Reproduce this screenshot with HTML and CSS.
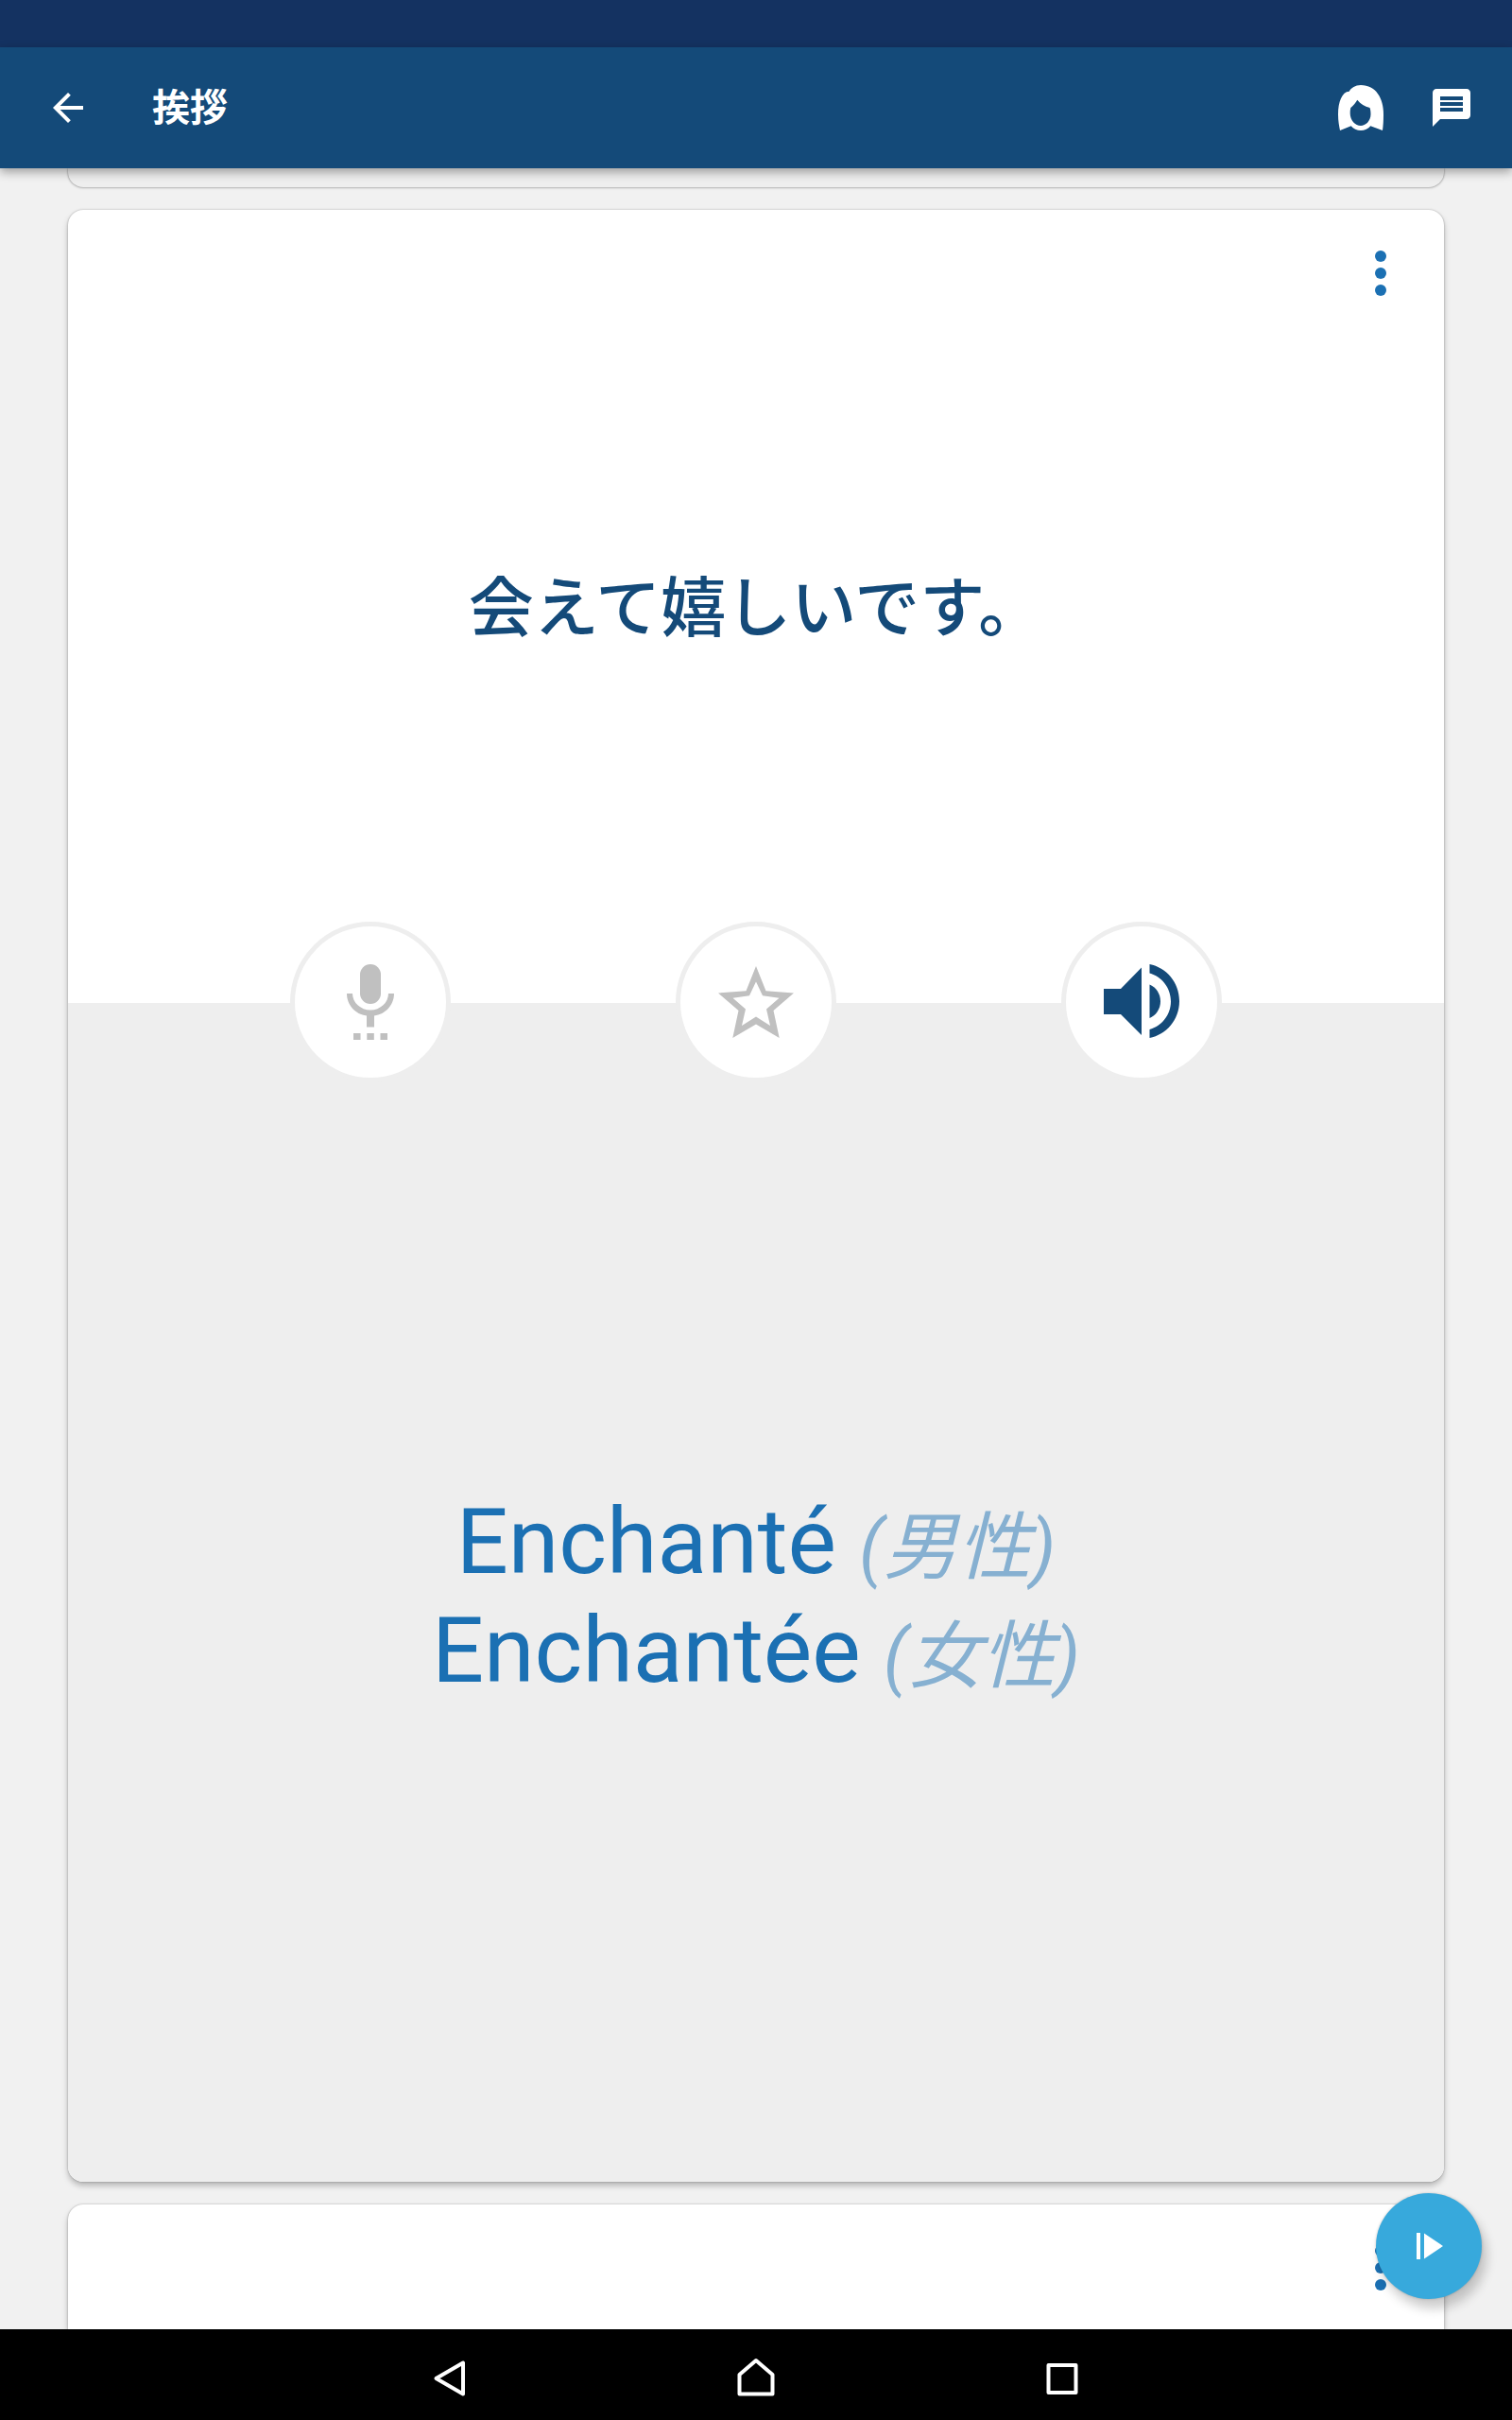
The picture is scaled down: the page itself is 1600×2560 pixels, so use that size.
FILE: index.html
```html
<!DOCTYPE html>
<html lang="ja">
  <head>
    <meta charset="UTF-8" />
    <meta name="viewport" content="width=device-width, initial-scale=1.0" />
    <title>挨拶</title>
    <link rel="stylesheet" href="styles.css">
  </head>
  <body>
    <div class="statusbar"></div>
    <header class="appbar">
      <a class="icon-btn" href="#" aria-label="戻る">
        <svg viewBox="0 0 24 24"><path d="M20 11H7.830l5.590-5.590L12 4l-8 8 8 8 1.410-1.410L7.830 13H20v-2z" /></svg>
      </a>
      <h1>挨拶</h1>
      <button class="icon-btn" aria-label="女性">
        <svg viewBox="0 0 48 48"><path fill-rule="evenodd" d="M24 0C18 0 14 3 11.700 6.700C4 7 0 18 0 31C0 38 1 43 2 48L13.700 43.300C16 46.500 20 48 24 48C28 48 32 46.500 34.300 43.300L47 48C47.700 43 48 38 48 31C48 14 40 0 24 0ZM20.300 15.700C24 20 28 22.500 33.500 24C34.300 26 34.500 28 34.500 31C34.500 38 29 43 24 43C18 43 12.700 37 12.700 30C12.700 28 12.700 26 13.300 24C16 21.500 18.500 19 20.300 15.700Z" /></svg>
      </button>
      <button class="icon-btn" aria-label="メッセージ">
        <svg viewBox="0 0 24 24"><path d="M20 2H4c-1.100 0-1.990.9-1.990 2L2 22l4-4h14c1.100 0 2-.9 2-2V4c0-1.100-.9-2-2-2zm-2 12H6v-2h12v2zm0-3H6V9h12v2zm0-3H6V6h12v2z" /></svg>
      </button>
    </header>

    <main class="cards">
      <article class="card card-prev"></article>

      <article class="card card-current">
        <section class="phrase">
          <button class="menu" aria-label="メニュー">
            <svg viewBox="0 0 96 96"><circle cx="48" cy="30" r="6" /><circle cx="48" cy="48" r="6" /><circle cx="48" cy="66" r="6" /></svg>
          </button>
          <p>会えて嬉しいです。</p>
        </section>
        <section class="translation">
          <div class="actions">
            <button class="round" aria-label="録音">
              <svg viewBox="0 0 80 80">
                <rect x="29" y="0" width="22" height="42" rx="11" />
                <path d="M15 31h6a19 17.500 0 0 0 38 0h6c0 12-9 22-21 23.500V66.500h-8V54.500C24 53 15 43 15 31z" />
                <path d="M22 73h7.500v7H22zM36.300 73h7.500v7h-7.500zM50.500 73H58v7h-7.500z" />
              </svg>
            </button>
            <button class="round" aria-label="お気に入り">
              <svg viewBox="0 0 80 80"><path fill-rule="evenodd" d="M40 2L50.500 28.300L80 30.500L58.500 49L64.700 78L40 63.500L15.300 78L21.500 49L0 30.500L29.500 28.300ZM40 18.500L33 33.300L15.500 35.700L29 47.500L25 65L40 55.500L55 65L51 47.500L64.500 35.700L47 33.300Z" /></svg>
            </button>
            <button class="round sound" aria-label="再生">
              <svg viewBox="0 0 80 80">
                <path d="M0 26h18L40 3.500V75L18 53H0z" />
                <path d="M48.500 21.500C55 24 60 31 60 39.300S55 54.500 48.500 57z" />
                <path d="M48.500 0C66 3.500 80 19 80 39S66 74.500 48.500 78V69C61 65.500 71 54 71 39.300S61 13 48.500 9.500z" />
              </svg>
            </button>
          </div>
          <p>Enchanté <i>(男性)</i><br />Enchantée <i>(女性)</i></p>
        </section>
      </article>

      <article class="card card-next">
        <button class="menu" aria-label="メニュー">
          <svg viewBox="0 0 96 96"><circle cx="48" cy="30" r="6" /><circle cx="48" cy="48" r="6" /><circle cx="48" cy="66" r="6" /></svg>
        </button>
      </article>

      <button class="fab" aria-label="スライド再生">
        <svg viewBox="0 0 48 48"><path d="M11 10h4v28h-4zM19 10.500L39 24L19 37.500z" /></svg>
      </button>
    </main>

    <nav class="navbar">
      <button aria-label="戻る">
        <svg viewBox="0 0 48 48"><path d="M38 11.500v33L9.500 28z" /></svg>
      </button>
      <button aria-label="ホーム">
        <svg viewBox="0 0 48 48"><path d="M24 9L41.500 24V44.500H6.500V24z" /></svg>
      </button>
      <button aria-label="アプリ履歴">
        <svg viewBox="0 0 48 48"><path d="M9.500 14h29v29h-29z" /></svg>
      </button>
    </nav>
  </body>
</html>
```

FILE: styles.css
```css
* {
  box-sizing: border-box;
}
body {
  margin: 0;
  height: 100vh;
  display: flex;
  flex-direction: column;
  overflow: hidden;
  background-color: #f1f1f1;
  font-family: Roboto, "Noto Sans CJK JP", sans-serif;
}
button {
  border: 0;
  padding: 0;
  background: none;
  cursor: pointer;
}
svg {
  display: block;
  fill: currentColor;
}
h1,
p {
  margin: 0;
}

.statusbar {
  flex: none;
  height: 50px;
  background-color: #143261;
}
.appbar {
  flex: none;
  display: flex;
  align-items: center;
  height: 128px;
  padding: 0 40px 0 48px;
  color: #fff;
  background-color: #144a79;
  box-shadow: 0 4px 10px rgba(0, 0, 0, 0.35);
  z-index: 1;
}
.appbar h1 {
  flex: 1;
  margin-left: 65px;
  padding-top: 2px;
  font-size: 40px;
  line-height: 48px;
  font-weight: bold;
}
.icon-btn {
  color: #fff;
}
.icon-btn + .icon-btn {
  margin-left: 48px;
}
.icon-btn svg {
  width: 48px;
  height: 48px;
}

.cards {
  flex: 1;
  min-height: 0;
  position: relative;
  display: flex;
  flex-direction: column;
  gap: 24px;
  padding: 0 72px;
  overflow: hidden;
}
.card {
  position: relative;
  border-radius: 16px;
  background-color: #fff;
  box-shadow: 0 0 2px rgba(0, 0, 0, 0.3), 0 4px 6px rgba(0, 0, 0, 0.25);
}
.card-prev {
  height: 20px;
  border-radius: 0 0 16px 16px;
  background-color: #eee;
  box-shadow: 0 0 2px rgba(0, 0, 0, 0.4), 0 1px 3px rgba(0, 0, 0, 0.15);
}
.card-current {
  flex: 1;
  display: flex;
  flex-direction: column;
}
.card-next {
  height: 132px;
  border-radius: 16px 16px 0 0;
}
.phrase,
.translation {
  display: flex;
  align-items: center;
  justify-content: center;
  text-align: center;
}
.phrase {
  flex: 37;
  color: #144a79;
  font-size: 69px;
  font-weight: 500;
}
.phrase p {
  padding-bottom: 6px;
}
.translation {
  flex: 55;
  position: relative;
  border-radius: 0 0 16px 16px;
  background-color: #eee;
  color: #1b70b3;
  font-size: 97px;
  line-height: 115px;
}
.translation p {
  padding-top: 10px;
}
.translation i {
  font-size: 78px;
  line-height: 1;
  color: #86b0d1;
}
.menu {
  position: absolute;
  top: 19px;
  right: 19px;
  color: #1b70b3;
}
.menu svg {
  width: 96px;
  height: 96px;
}

/* buttons sitting on the line between both halves */
.actions {
  position: absolute;
  top: -86px;
  left: 0;
  right: 0;
  display: flex;
  justify-content: center;
  gap: 238px;
}
.round {
  display: flex;
  align-items: center;
  justify-content: center;
  width: 170px;
  height: 170px;
  border: 5px solid #eee;
  border-radius: 50%;
  background-color: #fff;
  color: #c0c0c0;
}
.round svg {
  width: 80px;
  height: 80px;
}
.sound {
  color: #144a79;
}

.fab {
  position: absolute;
  right: 32px;
  bottom: 32px;
  display: flex;
  align-items: center;
  justify-content: center;
  width: 112px;
  height: 112px;
  border-radius: 50%;
  color: #fff;
  background-color: #37a9dc;
  box-shadow: 0 0 3px rgba(0, 0, 0, 0.2), 5px 10px 12px rgba(0, 0, 0, 0.2);
}
.fab svg {
  width: 48px;
  height: 48px;
}

.navbar {
  flex: none;
  display: flex;
  align-items: center;
  justify-content: center;
  gap: 276px;
  height: 96px;
  background-color: #000;
  z-index: 1;
}
.navbar svg {
  width: 48px;
  height: 48px;
  fill: none;
  stroke: #fff;
  stroke-width: 4;
  stroke-linejoin: round;
}
```
